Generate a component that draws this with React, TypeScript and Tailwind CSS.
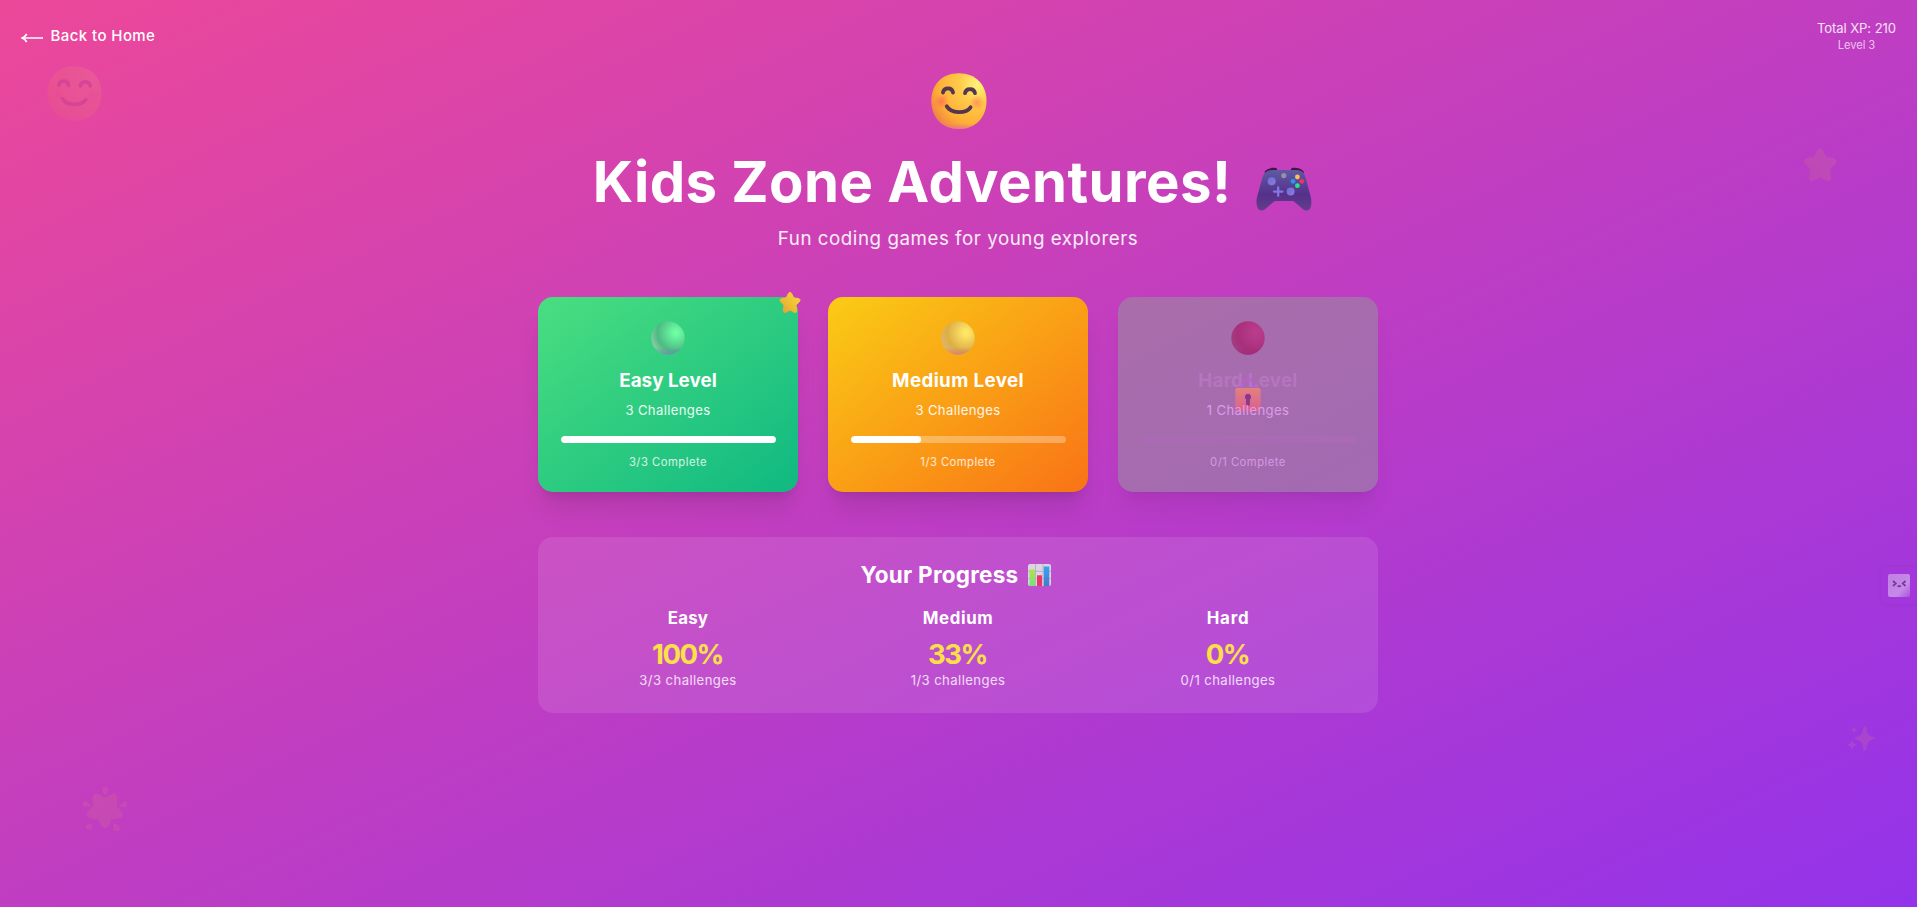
import React from "react";

const facePath =
  "M28 .2C44.500 .2 55.500 11.500 55.500 27.800S45 56 28 56 .300 44.500 .300 27.800 11.500 .200 28 .200Z";

function Smile({ className, id }: { className: string; id: string }) {
  return (
    <svg viewBox="0 0 56 56" className={className} aria-hidden="true">
      <defs>
        <radialGradient id={`${id}-a`} cx="0.84" cy="0.2" r="0.98">
          <stop offset="0" stopColor="#fff478" />
          <stop offset="0.35" stopColor="#ffc94a" />
          <stop offset="0.75" stopColor="#ffae34" />
          <stop offset="1" stopColor="#ee7f48" />
        </radialGradient>
        <linearGradient id={`${id}-b`} x1="0" y1="0" x2="0" y2="1">
          <stop offset="0.9" stopColor="#e06fa0" stopOpacity="0" />
          <stop offset="1" stopColor="#dc6fae" stopOpacity="0.65" />
        </linearGradient>
        <radialGradient id={`${id}-c`}>
          <stop offset="0" stopColor="#ff6460" stopOpacity="0.75" />
          <stop offset="1" stopColor="#ff6460" stopOpacity="0" />
        </radialGradient>
      </defs>
      <path d={facePath} fill={`url(#${id}-a)`} />
      <path d={facePath} fill={`url(#${id}-b)`} />
      <circle cx="10.500" cy="28.500" r="7.500" fill={`url(#${id}-c)`} />
      <circle cx="46" cy="29.500" r="7.500" fill={`url(#${id}-c)`} opacity="0.7" />
      <g fill="none" stroke="#533650" strokeWidth="3.800" strokeLinecap="round">
        <path d="M12 19.500C12.800 14 21.200 14 22 19.500" />
        <path d="M34 20.200C34.800 14.700 43.200 14.700 44 20.200" />
        <path d="M15.700 33.300C20 40.800 35 40.800 39.600 34.300" />
      </g>
    </svg>
  );
}

function Gamepad({ className }: { className: string }) {
  return (
    <svg viewBox="0 0 56 44" className={className} aria-hidden="true">
      <defs>
        <linearGradient id="pad" x1="0" y1="0" x2="0" y2="1">
          <stop offset="0" stopColor="#5d5aa5" />
          <stop offset="0.6" stopColor="#55308a" />
          <stop offset="1" stopColor="#643d8c" />
        </linearGradient>
        <linearGradient id="stick" x1="0" y1="0" x2="1" y2="1">
          <stop offset="0" stopColor="#6f6ccf" />
          <stop offset="1" stopColor="#8b7ce4" />
        </linearGradient>
      </defs>
      <path d="M8.500 5C10.500 1.500 16 .200 20.500 1.200L22 4.500H34L35.500 1.200C40 .200 45.500 1.500 48 5L46 9H10Z" fill="#4a1048" />
      <path d="M13 3.500C15 3 17 3 19 3H37C40 3 42 3 44 3.500 47.500 4.500 49 8 50 12L55 31C55.800 36 55.500 43.500 50.500 43.500 48 43.500 46.500 42 45 40.500L38.500 35C37.500 34.300 37 34 36 34H20C19 34 18.300 34.300 17.500 35L11 40.500C9.500 42 8 43.500 5.500 43.500 .500 43.500 0 36 .800 31L6 12C7.200 8 9 4.500 13 3.500Z" fill="url(#pad)" />
      <circle cx="15.600" cy="14.200" r="4" fill="url(#stick)" />
      <circle cx="34.600" cy="24.400" r="4" fill="url(#stick)" />
      <path d="M22.200 20.400V28.800M18 24.600H26.400" stroke="#8476e4" strokeWidth="2.300" strokeLinecap="round" />
      <circle cx="27.800" cy="8.600" r="2.600" fill="#998ea5" />
      <circle cx="41.400" cy="10" r="2.400" fill="#ffbd52" />
      <circle cx="45.800" cy="14.300" r="2.400" fill="#f92f60" />
      <circle cx="37" cy="14.300" r="2.400" fill="#2499f4" />
      <circle cx="41.400" cy="18.700" r="2.400" fill="#2fe08b" />
    </svg>
  );
}

const starPath =
  "M14.200 2.700C15.200 .500 17.800 .500 18.800 2.700L22 9.300 29 10.300C31.600 10.700 32.300 13.300 30.500 15.100L25.400 20.200 26.600 28.200C27 30.800 24.800 32 22.600 30.800L16.500 27.400 10.400 30.800C8.200 32 6 30.800 6.400 28.200L7.600 20.200 2.500 15.100C.700 13.300 1.400 10.700 4 10.300L11 9.300Z";

function Star({ className, id }: { className: string; id: string }) {
  return (
    <svg viewBox="0 0 33 32.500" className={className} aria-hidden="true">
      <defs>
        <linearGradient id={id} x1="0" y1="1" x2="1" y2="0">
          <stop offset="0" stopColor="#e89a38" />
          <stop offset="0.45" stopColor="#ecbe33" />
          <stop offset="1" stopColor="#fbd83f" />
        </linearGradient>
      </defs>
      <path d={starPath} fill={`url(#${id})`} stroke={`url(#${id})`} strokeWidth="1.500" strokeLinejoin="round" />
    </svg>
  );
}

function GlowingStar({ className }: { className: string }) {
  return (
    <svg viewBox="0 0 46 46" className={className} fill="#f0a060" aria-hidden="true">
      <path d="M23 41C20.500 41 19.500 39 18.500 37L16.500 32.500 9 31.500C4.500 30.500 3 27.500 6 24.500L11 19 10.500 12C10.500 7.500 13.500 5.500 17 7.500L23 10.500 29 7.500C32.500 5.500 35.500 7 35.300 11.500L34.500 19 39.500 24.500C42 28 40.500 30.500 36.500 31.500L29.500 32.500 27.500 37C26.500 39.500 25 41 23 41Z" />
      <path d="M20.300 2.200C20 .800 21 .300 22 .300H24.500C26 .300 26.500 1 26.200 2.200L24.500 7.500H21.800ZM.800 16.800C1.500 13.800 2.800 13.300 4 14L8.500 18V19.500L2 19.500C1 19.500 .500 18.500 .800 16.800ZM45.200 17.200C44.500 14.200 43.200 13.700 42 14.500L37.500 18.500V20L44 20C45 20 45.500 19 45.200 17.200ZM5 42C3.500 41.500 3.300 40 4 38.500L8 36.500 10.500 37.500 9.500 42.500C8 43.500 6.500 43 5 42ZM37 43.500C38 42.500 38 41 37.200 39.500L33.500 36.500 31 37.500 31.500 42.500C33 44.500 35 44.500 37 43.500Z" />
    </svg>
  );
}

function Sparkles({ className }: { className: string }) {
  return (
    <svg viewBox="0 0 28 27" className={className} fill="#ee9a62" aria-hidden="true">
      <path d="M16.500 2C17 .500 18.500 .500 19 2L20.300 7.500C21 9.500 22 10.500 24 11.200L27 12.200C28.300 12.700 28.300 13.700 27 14.200L24 15.200C22 16 21 17 20.300 19L19 25C18.500 26.500 17 26.500 16.500 25L15.200 19C14.500 17 13.500 16 11.500 15.200L8.500 14.200C7.200 13.700 7.200 12.700 8.500 12.200L11.500 11.200C13.500 10.500 14.500 9.500 15.200 7.500Z" />
      <path d="M7 1 8 4 11 5 8 6 7 9 6 6 3 5 6 4ZM5 14.500 6.500 18.500 10.500 20 6.500 21.500 5 25.500 3.500 21.500 0 20 3.500 18.500Z" />
    </svg>
  );
}

function Chart({ className }: { className: string }) {
  return (
    <svg viewBox="0 0 23 22" className={className} aria-hidden="true">
      <defs>
        <linearGradient id="bar-green" x1="0" y1="0" x2="0" y2="1">
          <stop offset="0" stopColor="#b4e04a" />
          <stop offset="1" stopColor="#6ee67c" />
        </linearGradient>
        <linearGradient id="bar-blue" x1="0" y1="0" x2="0" y2="1">
          <stop offset="0" stopColor="#32a6f0" />
          <stop offset="1" stopColor="#4a78cc" />
        </linearGradient>
      </defs>
      <rect width="23" height="22" rx="2" fill="#dcd3e3" />
      <path d="M7.500 0V22M15 0V22M0 7.300H23M0 14.600H23" stroke="#b9a9c6" strokeWidth="0.900" />
      <rect x="1.500" y="5.500" width="5.500" height="16.500" fill="url(#bar-green)" />
      <rect x="9" y="11.300" width="5" height="10.700" fill="#e8356b" />
      <rect x="15.800" y="2.500" width="5.500" height="19.500" fill="url(#bar-blue)" />
    </svg>
  );
}

function Lock({ className }: { className: string }) {
  return (
    <svg viewBox="0 0 26 34" className={className} aria-hidden="true">
      <defs>
        <linearGradient id="lock-body" x1="0" y1="0" x2="0" y2="1">
          <stop offset="0" stopColor="#e28180" />
          <stop offset="1" stopColor="#da5f8e" />
        </linearGradient>
      </defs>
      <path d="M7 11V8C7 -1 19 -1 19 8V11" fill="none" stroke="#b95fd0" strokeWidth="2.600" />
      <rect x="0.300" y="10" width="25.400" height="23.500" rx="2.200" fill="url(#lock-body)" />
      <path d="M13 15.700A3.300 3.300 0 0 1 14.900 21.600V26.200A1.900 1.900 0 0 1 11.100 26.200V21.600A3.300 3.300 0 0 1 13 15.700Z" fill="#8b378f" />
    </svg>
  );
}

type OrbTone = { highlight: string; body: string; edge: string; base: string };

function Orb({ id, tone }: { id: string; tone: OrbTone }) {
  return (
    <svg viewBox="0 0 34 34" className="block size-[34px]" aria-hidden="true">
      <defs>
        <radialGradient id={`${id}-a`} cx="0.74" cy="0.34" r="0.8">
          <stop offset="0.08" stopColor={tone.highlight} />
          <stop offset="0.7" stopColor={tone.body} />
          <stop offset="1" stopColor={tone.edge} />
        </radialGradient>
        <linearGradient id={`${id}-b`} x1="0" y1="0" x2="0" y2="1">
          <stop offset="0.78" stopColor={tone.base} stopOpacity="0" />
          <stop offset="1" stopColor={tone.base} stopOpacity="0.9" />
        </linearGradient>
      </defs>
      <circle cx="17" cy="17" r="16.700" fill={`url(#${id}-a)`} />
      <circle cx="17" cy="17" r="16.700" fill={`url(#${id}-b)`} />
    </svg>
  );
}

interface Level {
  id: string;
  name: string;
  challenges: string;
  complete: string;
  percent: number;
  tone: OrbTone;
  card: string;
  title: string;
  count: string;
  status: string;
  track: string;
  done?: boolean;
  locked?: boolean;
}

const levels: Level[] = [
  {
    id: "easy",
    name: "Easy Level",
    challenges: "3 Challenges",
    complete: "3/3 Complete",
    percent: 100,
    tone: { highlight: "#6dfda3", body: "#4cba84", edge: "#8fcfa6", base: "#5f93a4" },
    card: "bg-[linear-gradient(to_bottom_right,#4ade80,#10b981)] shadow-xl",
    title: "text-white tracking-[0.05px]",
    count: "text-white/90",
    status: "text-white/80 tracking-[0.5px]",
    track: "bg-white/30",
    done: true,
  },
  {
    id: "medium",
    name: "Medium Level",
    challenges: "3 Challenges",
    complete: "1/3 Complete",
    percent: 33,
    tone: { highlight: "#ffe766", body: "#dcae45", edge: "#dfb670", base: "#d87e6c" },
    card: "bg-[linear-gradient(to_bottom_right,#facc15,#f97316)] shadow-xl",
    title: "text-white tracking-[0.38px]",
    count: "text-white/90",
    status: "text-white/80 tracking-[0.45px]",
    track: "bg-white/30",
  },
  {
    id: "hard",
    name: "Hard Level",
    challenges: "1 Challenges",
    complete: "0/1 Complete",
    percent: 0,
    tone: { highlight: "#b93c8c", body: "#a82f7c", edge: "#a04080", base: "#a02c7a" },
    card: "bg-[linear-gradient(to_bottom_right,rgba(152,141,157,0.6),rgba(152,137,161,0.6))] shadow-[0_20px_25px_-5px_rgba(0,0,0,0.06),0_8px_10px_-6px_rgba(0,0,0,0.06)]",
    title: "text-[#b675bf] tracking-[0.25px]",
    count: "text-[#dc9ce7]",
    status: "text-[#d598e0] tracking-[0.48px]",
    track: "bg-[#ab6bb4]",
    locked: true,
  },
];

function LevelCard({ level }: { level: Level }) {
  return (
    <div className={`relative flex h-[194.500px] flex-col items-center rounded-[15px] px-[22.500px] pt-[24px] text-center ${level.card}`}>
      <Orb id={level.id} tone={level.tone} />
      <h3 className={`mt-[12.500px] text-[18.750px] leading-[26.250px] font-bold ${level.title}`}>{level.name}</h3>
      {level.locked && <Lock className="absolute top-[81px] left-[117px] h-[34px] w-[26px]" />}
      <p className={`relative mt-[7.500px] text-[13.125px] leading-[18.750px] tracking-[0.36px] ${level.count}`}>{level.challenges}</p>
      <div className={`mt-[15.500px] h-[7.500px] w-full overflow-hidden rounded-full ${level.track}`}>
        <div className="h-full rounded-full bg-white" style={{ width: `${level.percent}%` }} />
      </div>
      <p className={`mt-[12px] text-[11.250px] leading-[15px] ${level.status}`}>{level.complete}</p>
      {level.done && <Star id="badge-star" className="absolute -top-[6px] -right-[3px] h-[23px] w-[22px]" />}
    </div>
  );
}

const stats = [
  { name: "Easy", value: "100%", detail: "3/3 challenges", nameTracking: "tracking-[0.2px]" },
  { name: "Medium", value: "33%", detail: "1/3 challenges", nameTracking: "tracking-[0.65px]" },
  { name: "Hard", value: "0%", detail: "0/1 challenges", nameTracking: "tracking-[0.8px]" },
];

export default function App() {
  return (
    <div className="relative h-[907px] w-full overflow-hidden bg-[linear-gradient(to_bottom_right,#ec4899,#9333ea)] font-['Inter',sans-serif] text-white">
      <Smile id="float-smile" className="absolute top-[66px] left-[47px] size-[55px] opacity-10" />
      <Star id="float-star" className="absolute top-[148px] left-[1803px] size-[34px] opacity-10" />
      <Sparkles className="absolute top-[725px] left-[1847px] h-[27px] w-[28px] opacity-15" />
      <GlowingStar className="absolute top-[787px] left-[82px] size-[46px] opacity-[0.12]" />
      <div className="absolute top-[567px] right-0 flex h-[37px] w-[36px] items-center rounded-l-[6px] pl-[7px] shadow-[0_0_4px_rgba(0,0,0,0.07)]">
        <svg viewBox="0 0 22 23" className="h-[23px] w-[22px]" aria-hidden="true">
          <defs>
            <linearGradient id="bot" x1="0" y1="0" x2="1" y2="1">
              <stop offset="0" stopColor="#c07fe4" />
              <stop offset="0.65" stopColor="#c58ae8" />
              <stop offset="1" stopColor="#ad52dc" />
            </linearGradient>
          </defs>
          <rect width="22" height="23" rx="2" fill="url(#bot)" />
          <path d="M5 7 7.800 9.500 5 12M17.500 7 14.700 9.500 17.500 12M9.800 11.500C10.500 12.700 12 12.700 12.700 11.500" fill="none" stroke="#7a359f" strokeWidth="1.700" />
        </svg>
      </div>

      <header className="flex items-center justify-between px-[21px] pt-[19px]">
        <a className="flex items-center gap-[7.500px] text-[15px] leading-[22.500px] font-medium tracking-[0.42px]">
          <svg viewBox="0 0 22 10" className="mt-[4px] h-[10px] w-[22px]" fill="none" stroke="currentColor" aria-hidden="true">
            <path d="M2 5H22" strokeWidth="1.500" />
            <path d="M5.700 1C4.500 3.200 3.200 4.400 1 5 3.200 5.600 4.500 6.800 5.700 9" strokeWidth="1.700" />
          </svg>
          <span>Back to Home</span>
        </a>
        <div className="text-center">
          <p className="text-[13.125px] leading-[18.750px] tracking-[-0.09px] text-white/85">Total XP: 210</p>
          <p className="text-[11.250px] leading-[15px] tracking-[-0.1px] text-white/70">Level 3</p>
        </div>
      </header>

      <main className="mx-auto w-[841px] pt-[20px] pr-px">
        <div className="flex justify-center pl-px">
          <Smile id="hero-smile" className="size-[56px]" />
        </div>
        <h1 className="mt-[25px] flex h-[56.250px] items-start justify-center gap-[25px] text-[56.250px] leading-[56.250px] font-bold tracking-[0.45px] whitespace-nowrap">
          <span>Kids Zone Adventures!</span>
          <Gamepad className="mt-[13px] mr-[11px] h-[44px] w-[56px]" />
        </h1>
        <p className="mt-[15.500px] text-center text-[18.750px] leading-[26.250px] tracking-[0.53px] text-white/90">
          Fun coding games for young explorers
        </p>

        <section className="mt-[45.250px] grid grid-cols-3 gap-[30px]">
          {levels.map((level) => (
            <LevelCard key={level.id} level={level} />
          ))}
        </section>

        <section className="mt-[45.500px] rounded-[15px] bg-white/10 p-[22.500px]">
          <h2 className="flex items-center justify-center gap-[10px] pr-[4px] text-[22.500px] leading-[30px] font-bold tracking-[0.24px]">
            <span>Your Progress</span>
            <Chart className="mt-px h-[22px] w-[23px]" />
          </h2>
          <div className="mt-[15px] grid grid-cols-3 gap-[15px] text-center">
            {stats.map((stat) => (
              <div key={stat.name}>
                <h3 className={`text-[16.875px] leading-[26.250px] font-bold ${stat.nameTracking}`}>{stat.name}</h3>
                <p className="mt-[7px] pr-px text-[27.500px] leading-[33.750px] font-bold tracking-[-1.5px] text-[#fde047]">{stat.value}</p>
                <p className="-mt-px pb-px text-[13.125px] leading-[18.750px] tracking-[0.42px] text-white/80">{stat.detail}</p>
              </div>
            ))}
          </div>
        </section>
      </main>
    </div>
  );
}
